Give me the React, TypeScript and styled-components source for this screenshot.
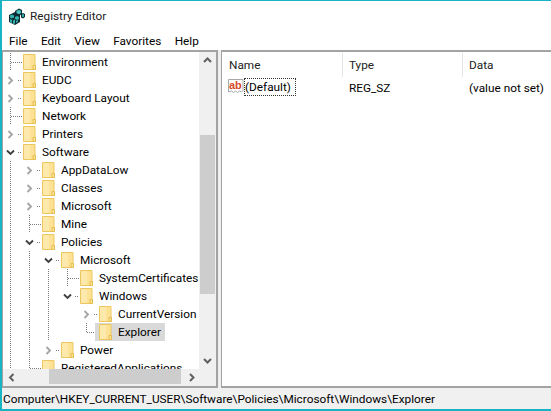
import React from 'react';
import styled, { createGlobalStyle } from 'styled-components';

const GlobalStyle = createGlobalStyle`
  html, body { margin: 0; padding: 0; background: #fff; overflow: hidden; }
  body { font-family: Roboto, 'Noto Sans', sans-serif; font-size: 11.8px; color: #000; }
`;

type NodeState = 'leaf' | 'closed' | 'open';

interface TreeNode {
  label: string;
  depth: number;
  state: NodeState;
  guides: number[];
  last?: boolean;
  selected?: boolean;
}

const nodes: TreeNode[] = [
  { label: 'Environment', depth: 0, state: 'leaf', guides: [] },
  { label: 'EUDC', depth: 0, state: 'closed', guides: [] },
  { label: 'Keyboard Layout', depth: 0, state: 'closed', guides: [] },
  { label: 'Network', depth: 0, state: 'leaf', guides: [] },
  { label: 'Printers', depth: 0, state: 'closed', guides: [] },
  { label: 'Software', depth: 0, state: 'open', guides: [] },
  { label: 'AppDataLow', depth: 1, state: 'closed', guides: [0] },
  { label: 'Classes', depth: 1, state: 'closed', guides: [0] },
  { label: 'Microsoft', depth: 1, state: 'closed', guides: [0] },
  { label: 'Mine', depth: 1, state: 'leaf', guides: [0] },
  { label: 'Policies', depth: 1, state: 'open', guides: [0] },
  { label: 'Microsoft', depth: 2, state: 'open', guides: [0, 1] },
  { label: 'SystemCertificates', depth: 3, state: 'leaf', guides: [0, 1, 2] },
  { label: 'Windows', depth: 3, state: 'open', guides: [0, 1, 2], last: true },
  { label: 'CurrentVersion', depth: 4, state: 'closed', guides: [0, 1, 2] },
  { label: 'Explorer', depth: 4, state: 'leaf', guides: [0, 1, 2], last: true, selected: true },
  { label: 'Power', depth: 2, state: 'closed', guides: [0, 1], last: true },
  { label: 'RegisteredApplications', depth: 1, state: 'leaf', guides: [0] },
];

const dots = 'repeating-linear-gradient(to bottom, #7a7a7a 0, #7a7a7a 1px, transparent 1px, transparent 2px)';
const hdots = 'repeating-linear-gradient(to right, #7a7a7a 0, #7a7a7a 1px, transparent 1px, transparent 2px)';

const FolderIcon = () => (
  <FolderSvg width="13" height="16" viewBox="0 0 13 16">
    <path d="M.5.5h11.500v15H.5z" fill="#fde296" stroke="#ecc75e" />
    <path d="M1 1h6v14H1z" fill="#fee9ac" />
    <path d="M10 11.500h2.500v4H10z" fill="#fbe39a" stroke="#e6bd4c" />
  </FolderSvg>
);

const Chevron = ({ open }: { open: boolean }) => (
  <ChevronSvg width="9" height="9" viewBox="0 0 9 9">
    {open ? (
      <path d="M1 2.500l3.500 3.500L8 2.500" fill="none" stroke="#404040" strokeWidth="1.900" />
    ) : (
      <path d="M2.500 1L6 4.500 2.500 8" fill="none" stroke="#a6a6a6" strokeWidth="1.900" />
    )}
  </ChevronSvg>
);

const AppIcon = () => (
  <svg width="17" height="17" viewBox="0 0 17 17">
    <path d="M0 7l6-3 5 2.500V14l-5 3-6-3z" fill="#0f2a33" />
    <path d="M1 7.500l2-1 2 1v2l-2 1-2-1zM6 9l2-1 2 1v2l-2 1-2-1zM1 11l2 1v3l-2-1zM4 12.500l2-1v4l-2 .5zM7 13l2-1v1.500L7 15z" fill="#2fb5ad" />
    <path d="M6 3l4-2.500 3 1.500v4l-3 2-4-2.500z" fill="#0f2a33" />
    <path d="M7.500 3l2.500-1.300L12 3v2l-2 1.200L7.500 5z" fill="#4cc9bf" />
    <path d="M12 6l2-1 2 1v3l-2 1.500-2-1z" fill="#0f2a33" />
    <path d="M13 6.500l1-.5 1 .5v2l-1 .7-1-.7z" fill="#2fb5ad" />
  </svg>
);

const StringIcon = () => (
  <svg width="16" height="16" viewBox="0 0 16 16">
    <path d="M.5 .5h14.500v11l-1.500 1.500-2-1-2 1.500-2-1.500-2 1.500-2-1.500-3 1z" fill="#fff" stroke="#a8a8a8" />
    <text x="1" y="10" fontFamily="'Liberation Sans', sans-serif" fontWeight="700" fontSize="11" fill="#d8492a">
      ab
    </text>
  </svg>
);

const TreeRow = ({ node }: { node: TreeNode }) => (
  <Row>
    {Array.from({ length: node.depth }, (_, i) => (
      <Guide key={i} $on={node.guides.includes(i)} />
    ))}
    <Expander $last={!!node.last} $state={node.state}>
      {node.state !== 'leaf' && <Chevron open={node.state === 'open'} />}
    </Expander>
    <Item $selected={!!node.selected}>
      <FolderIcon />
      <span>{node.label}</span>
    </Item>
  </Row>
);

export default function App() {
  return (
    <Window>
      <GlobalStyle />
      <TitleBar>
        <AppIcon />
        <Title>Registry Editor</Title>
      </TitleBar>
      <MenuBar>
        {['File', 'Edit', 'View', 'Favorites', 'Help'].map(m => (
          <span key={m}>{m}</span>
        ))}
      </MenuBar>
      <Main>
        <TreePane>
          <TreeList>
            {nodes.map((n, i) => (
              <TreeRow key={i} node={n} />
            ))}
          </TreeList>
          <VScroll>
            <ScrollArrow>
              <svg width="9" height="9" viewBox="0 0 9 9">
                <path d="M1 6l3.500-3.500L8 6" fill="none" stroke="#606060" strokeWidth="2" />
              </svg>
            </ScrollArrow>
            <VThumb />
            <Spacer />
            <ScrollArrow>
              <svg width="9" height="9" viewBox="0 0 9 9">
                <path d="M1 3l3.500 3.500L8 3" fill="none" stroke="#606060" strokeWidth="2" />
              </svg>
            </ScrollArrow>
          </VScroll>
          <HScroll>
            <HArrow>
              <svg width="9" height="9" viewBox="0 0 9 9">
                <path d="M6.500 1L3 4.500 6.500 8" fill="none" stroke="#606060" strokeWidth="2" />
              </svg>
            </HArrow>
            <HThumb />
            <Spacer />
            <HArrow>
              <svg width="9" height="9" viewBox="0 0 9 9">
                <path d="M3 1l3.500 3.500L3 8" fill="none" stroke="#606060" strokeWidth="2" />
              </svg>
            </HArrow>
          </HScroll>
          <Corner />
        </TreePane>
        <ValuePane>
          <HeaderRow>
            <HeaderCell>Name</HeaderCell>
            <HeaderCell>Type</HeaderCell>
            <HeaderCell>Data</HeaderCell>
          </HeaderRow>
          <ValueRow>
            <NameCell>
              <StringIcon />
              <FocusText>(Default)</FocusText>
            </NameCell>
            <ValueCell>REG_SZ</ValueCell>
            <ValueCell>(value not set)</ValueCell>
          </ValueRow>
        </ValuePane>
      </Main>
      <StatusBar>Computer\HKEY_CURRENT_USER\Software\Policies\Microsoft\Windows\Explorer</StatusBar>
    </Window>
  );
}

const Window = styled.div`
  width: 551px;
  height: 411px;
  box-sizing: border-box;
  display: flex;
  flex-direction: column;
  border-top: 1px solid #18b4c4;
  border-left: 2px solid #18b4c4;
  border-bottom: 2px solid #18b4c4;
  background: #f0f0f0;
  overflow: hidden;
`;

const TitleBar = styled.div`
  height: 30px;
  box-sizing: border-box;
  flex: none;
  display: flex;
  align-items: center;
  gap: 4px;
  padding-left: 7px;
  background: #fff;
`;

const Title = styled.span`
  color: #222;
`;

const MenuBar = styled.div`
  height: 19px;
  box-sizing: border-box;
  flex: none;
  display: flex;
  align-items: center;
  gap: 13.4px;
  padding: 1px 0 0 7px;
  background: #fff;
`;

const Main = styled.div`
  height: 338px;
  flex: none;
  display: flex;
  gap: 3px;
`;

const TreePane = styled.div`
  width: 216px;
  flex: none;
  box-sizing: border-box;
  border: 2px solid #a3a3a3;
  border-left-width: 1px;
  background: #fff;
  display: grid;
  grid-template-columns: 196px 17px;
  grid-template-rows: 1fr 17px;
  overflow: hidden;
`;

const TreeList = styled.div`
  overflow: hidden;
  min-height: 0;
  padding: 1px 0 0 1px;
`;

const Row = styled.div`
  height: 18px;
  display: flex;
  align-items: stretch;
  white-space: nowrap;
`;

const Guide = styled.div<{ $on: boolean }>`
  width: 19px;
  flex: none;
  background-image: ${p => (p.$on ? dots : 'none')};
  background-size: 1px 100%;
  background-position: 6px 0;
  background-repeat: no-repeat;
`;

const Expander = styled.div<{ $last: boolean; $state: NodeState }>`
  width: 19px;
  flex: none;
  display: flex;
  align-items: center;
  padding-left: 2px;
  box-sizing: border-box;
  background-image: ${p => (p.$state === 'leaf' ? `${hdots}, ${dots}` : hdots)};
  background-size: ${p => (p.$state === 'leaf' ? `12px 1px, 1px ${p.$last ? '50%' : '100%'}` : '4px 1px')};
  background-position: ${p => (p.$state === 'leaf' ? '7px 50%, 6px 0' : '14px 50%')};
  background-repeat: no-repeat;
`;

const ChevronSvg = styled.svg`
  flex: none;
`;

const Item = styled.div<{ $selected: boolean }>`
  display: flex;
  align-items: center;
  gap: 6px;
  margin-left: -4px;
  padding: 0 4px;
  background: ${p => (p.$selected ? '#d9d9d9' : 'transparent')};
`;

const FolderSvg = styled.svg`
  flex: none;
`;

const VScroll = styled.div`
  display: flex;
  flex-direction: column;
  background: #f0f0f0;
`;

const ScrollArrow = styled.div`
  flex: none;
  height: 17px;
  display: flex;
  align-items: center;
  justify-content: center;
`;

const VThumb = styled.div`
  margin: 66px 1px 0;
  height: 159px;
  flex: none;
  background: #cdcdcd;
`;

const Spacer = styled.div`
  flex: 1;
`;

const HScroll = styled.div`
  display: flex;
  background: #f0f0f0;
`;

const HArrow = styled.div`
  flex: none;
  width: 16px;
  display: flex;
  align-items: center;
  justify-content: center;
`;

const HThumb = styled.div`
  margin: 0 0 2px 30px;
  width: 132px;
  flex: none;
  background: #cdcdcd;
`;

const Corner = styled.div`
  background: #f0f0f0;
`;

const ValuePane = styled.div`
  flex: 1;
  box-sizing: border-box;
  border: 2px solid #a3a3a3;
  border-left-width: 1px;
  border-right: 0;
  background: #fff;
`;

const HeaderRow = styled.div`
  height: 26px;
  display: flex;
`;

const HeaderCell = styled.div`
  width: 120px;
  flex: none;
  box-sizing: border-box;
  padding-left: 7px;
  line-height: 27px;
  color: #222;
  & + & {
    border-left: 1px solid #e5e5e5;
    padding-left: 6px;
    margin: 1px 0;
    line-height: 25px;
  }
`;

const ValueRow = styled.div`
  height: 18px;
  display: flex;
  align-items: center;
`;

const NameCell = styled.div`
  width: 120px;
  flex: none;
  display: flex;
  align-items: center;
  padding-left: 6px;
  box-sizing: border-box;
`;

const FocusText = styled.span`
  height: 18px;
  min-width: 52px;
  line-height: 18px;
  box-sizing: border-box;
  padding: 0 1px;
  outline: 1px dotted #333;
  outline-offset: -1px;
`;

const ValueCell = styled.div`
  width: 120px;
  flex: none;
  padding: 1px 0 0 7px;
  box-sizing: border-box;
`;

const StatusBar = styled.div`
  flex: 1;
  display: flex;
  align-items: center;
  padding: 1px 0 0 1px;
  white-space: nowrap;
`;
